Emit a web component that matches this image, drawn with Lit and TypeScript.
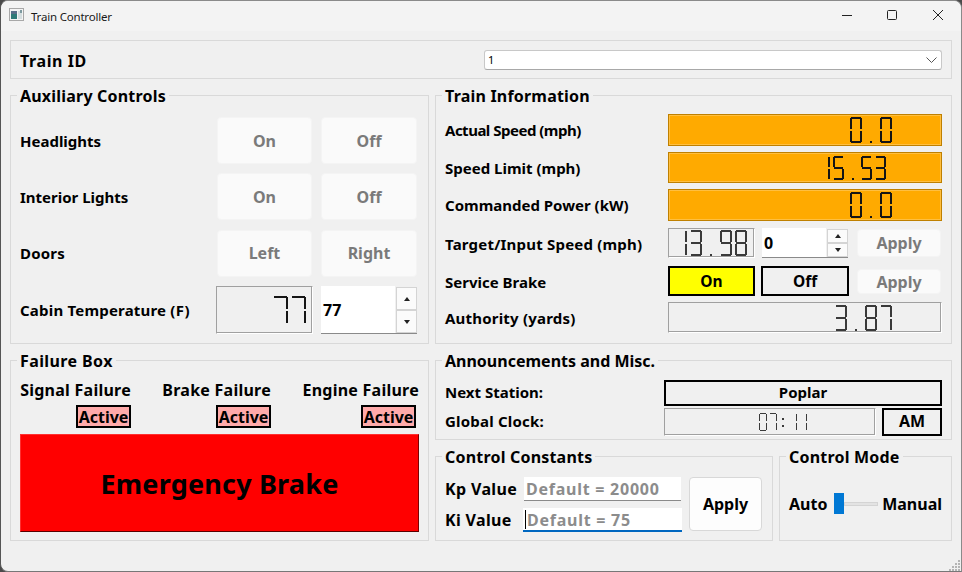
import { LitElement, html, css, svg } from "lit";
import { customElement } from "lit/decorators.js";

const SEG: Record<string, string> = {
  "0": "abcdef", "1": "bc", "2": "abged", "3": "abgcd", "4": "fgbc",
  "5": "afgcd", "6": "afgedc", "7": "abc", "8": "abcdefg", "9": "abcdfg",
};

function segRect(s: string, w: number, h: number, t: number, g: number) {
  const mid = Math.round((h - t) / 2);
  const half = Math.round(h / 2);
  switch (s) {
    case "a": return [g, 0, w - 2 * g, t];
    case "g": return [g, mid, w - 2 * g, t];
    case "d": return [g, h - t, w - 2 * g, t];
    case "f": return [0, g, t, half - g - 1];
    case "b": return [w - t, g, t, half - g - 1];
    case "e": return [0, half + 1, t, h - half - g - 1];
    default: return [w - t, half + 1, t, h - half - g - 1];
  }
}

type Lcd = { w: number; h: number; p: number; t: number; pad: number; cls?: string };

function lcd(value: string, o: Lcd) {
  const cells = [...value].map((c) => {
    if (c === "." || c === ":") {
      const d = Math.max(o.t, 2);
      const x = Math.round((o.p - 3 - d) / 2);
      return html`<span class="cell" style="width:${o.p}px;height:${o.h}px">
        ${c === "."
          ? html`<i class="seg" style="left:${x}px;top:${o.h - d}px;width:${d}px;height:${d}px"></i>`
          : html`<i class="seg" style="left:${x}px;top:${Math.round(o.h * 0.3)}px;width:${d}px;height:${d}px"></i>
                 <i class="seg" style="left:${x}px;top:${Math.round(o.h * 0.65)}px;width:${d}px;height:${d}px"></i>`}
      </span>`;
    }
    return html`<span class="cell" style="width:${o.p}px;height:${o.h}px">
      ${[...SEG[c]].map((s) => {
        const [x, y, w, h] = segRect(s, o.w, o.h, o.t, 1);
        return html`<i class="seg" style="left:${x}px;top:${y}px;width:${w}px;height:${h}px"></i>`;
      })}
    </span>`;
  });
  return html`<div class="lcd ${o.cls ?? ""}" style="padding-right:${o.pad - (o.p - o.w)}px">
    <span class="tl" style="padding-right:${o.pad}px">${value}</span>${cells}
  </div>`;
}

const grip = [
  [10, 0], [10, 3], [7, 3], [10, 6], [7, 6], [4, 6], [10, 9], [7, 9], [4, 9], [1, 9],
];

@customElement("app-root")
export class AppRoot extends LitElement {
  static styles = css`
    :host {
      display: block;
      width: 962px;
      height: 572px;
      background: #4a4a4a;
      overflow: hidden;
      font-family: "Noto Sans", sans-serif;
      font-size: 15px;
      font-weight: 700;
      color: #000;
    }
    .win {
      position: relative;
      box-sizing: border-box;
      width: 962px;
      height: 572px;
      background: #f0f0f0;
      border: 1px solid #8a8a8a;
      border-left-color: #555;
      border-bottom-color: #777;
      border-radius: 8px 8px 0 8px;
      overflow: hidden;
    }
    .title {
      box-sizing: border-box;
      height: 30px;
      background: #f3f3f3;
      display: flex;
      align-items: center;
      padding-left: 8px;
      font-size: 11.5px;
      font-weight: 400;
      letter-spacing: -0.2px;
      color: #1a1a1a;
    }
    .title .ic { margin-top: -2px; }
    .title .name { margin-left: 7px; }
    .title .ctl { margin-left: auto; display: flex; }
    .title .ctl svg { display: block; width: 46px; height: 30px; }
    .main {
      display: grid;
      grid-template-columns: 419px 517px;
      grid-template-rows: 39px 249px 181px;
      column-gap: 6px;
      row-gap: 16px;
      padding: 9px 0 0 9px;
    }
    .g {
      box-sizing: border-box;
      border: 1px solid #d9d9d9;
      display: flex;
      flex-direction: column;
      min-width: 0;
    }
    .lg {
      align-self: flex-start;
      margin: -10px 0 0 6px;
      padding: 0 3px;
      height: 20px;
      line-height: 20px;
      background: #f0f0f0;
      white-space: nowrap;
      font-size: 16px;
      letter-spacing: 0.2px;
    }
    .lg.in { margin-left: -3px; }
    .lg.wide { letter-spacing: 0.4px; }
    .lg.tight { letter-spacing: 0; }
    .trainid {
      grid-column: 1 / 3;
      flex-direction: row;
      align-items: center;
      padding: 0 9px;
      font-size: 16px;
      letter-spacing: 0.6px;
    }
    .trainid .tn { padding-top: 2px; }
    .combo {
      box-sizing: border-box;
      margin-left: auto;
      width: 458px;
      height: 20px;
      background: #fff;
      border: 1px solid #c8c8c8;
      border-bottom-color: #a8a8a8;
      border-radius: 3px;
      display: flex;
      align-items: center;
      justify-content: space-between;
      padding: 0 3px;
      font-size: 11px;
      font-weight: 400;
      letter-spacing: 0;
    }
    .combo svg { display: block; margin-right: 1px; }
    .aux {
      display: grid;
      grid-template-columns: 188px 95px 96px;
      grid-template-rows: 47px 47px 47px 48px;
      column-gap: 9px;
      row-gap: 9.4px;
      padding: 11px 0 0 9px;
      align-items: center;
    }
    .btn {
      box-sizing: border-box;
      height: 100%;
      display: flex;
      align-items: center;
      justify-content: center;
      border-radius: 4px;
      background: #fafafa;
      border: 1px solid #f4f4f4;
      color: #7a7a7a;
      font-size: 16px;
    }
    .lb { white-space: nowrap; font-size: 15px; }
    .lb.n { letter-spacing: -0.5px; }
    .lb.p { letter-spacing: 0.2px; }
    .lb.up { padding-bottom: 3px; }
    .lcd {
      position: relative;
      box-sizing: border-box;
      height: 100%;
      display: flex;
      align-items: center;
      justify-content: flex-end;
      background: #f0f0f0;
      border: 1px solid;
      border-color: #a0a0a0 #fff #fff #a0a0a0;
      box-shadow: inset -1px -1px 0 #a0a0a0;
    }
    .lcd.or {
      background: #ffaa00;
      border-color: #bf8000;
      box-shadow: inset -1px -1px 0 #ffbf40, inset 1px 1px 0 #ffbf40;
    }
    .lcd.tmp { margin: 0 -1px; }
    .cell { position: relative; display: block; flex: none; }
    .seg { position: absolute; background: #3a3a3a; display: block; }
    .lcd.or .seg, .lcd.tmp .seg { background: #151515; }
    .tl {
      position: absolute;
      inset: 0;
      display: flex;
      align-items: center;
      justify-content: flex-end;
      font-size: 12px;
      font-weight: 400;
      color: transparent;
      white-space: nowrap;
    }
    .spin {
      box-sizing: border-box;
      height: 100%;
      background: #fff;
      border-bottom: 1px solid #8a8a8a;
      display: flex;
      align-items: center;
      padding-left: 2px;
      font-size: 16px;
      position: relative;
    }
    .spin .v { flex: 1; }
    .spin .arrows {
      align-self: stretch;
      width: 22px;
      display: flex;
      flex-direction: column;
      background: #f0f0f0;
      padding: 1px 0 0 1px;
      box-sizing: border-box;
    }
    .spin .arrows span {
      flex: 1;
      background: #fbfbfb;
      border: 1px solid #d4d4d4;
      display: flex;
      align-items: center;
      justify-content: center;
    }
    .info {
      display: grid;
      grid-template-columns: 223px 274px;
      grid-template-rows: 38px 37px 39px 38px 36px 31px;
      padding: 8px 0 0 9px;
    }
    .info .lb { display: flex; align-items: center; height: 31px; }
    .h32 { height: 32px; }
    .h31 { height: 31px; }
    .h30 { height: 30px; }
    .fx { display: flex; }
    .fx .lcd { width: 87px; }
    .fx .spin { width: 86px; margin-left: 7px; height: 30px; }
    .apply {
      width: 84px;
      height: 28px;
      margin: 1px 0 0 9px;
    }
    .sb {
      box-sizing: border-box;
      width: 87px;
      height: 30px;
      border: 2px solid #000;
      display: flex;
      align-items: center;
      justify-content: center;
      font-size: 15.5px;
    }
    .sb.on { background: #ffff00; }
    .sb.off { margin-left: 6px; width: 88px; }
    .apply2 { width: 84px; height: 25px; margin: 3px 0 0 8px; }
    .fail { padding: 0 0 0 9px; }
    .fcols {
      display: grid;
      grid-template-columns: 111px 108px 116px;
      column-gap: 32px;
      margin-top: 9px;
      height: 48px;
    }
    .fc { display: flex; flex-direction: column; align-items: flex-end; white-space: nowrap; }
    .fc .n {
      height: 20px;
      line-height: 20px;
      margin-bottom: 5px;
      font-size: 16px;
      letter-spacing: 0.25px;
    }
    .act {
      box-sizing: border-box;
      width: 55px;
      height: 23px;
      border: 2px solid #000;
      background: #ffaaaa;
      display: flex;
      align-items: center;
      justify-content: center;
      font-size: 16px;
    }
    .act.last { margin-right: 3px; }
    .em {
      box-sizing: border-box;
      width: 399px;
      height: 98px;
      margin-top: 6px;
      background: #ff0000;
      border: 1px solid;
      border-color: #ff3030 #7a0000 #5a0000 #ff3030;
      display: flex;
      align-items: center;
      justify-content: center;
      font-size: 27px;
      letter-spacing: 0.2px;
    }
    .ann { padding: 0 9px; }
    .annrow {
      display: grid;
      grid-template-columns: 219px 1fr;
      align-items: center;
    }
    .annrow.a { margin-top: 9px; height: 22px; }
    .annrow.b { margin-top: 6px; height: 23px; }
    .box {
      box-sizing: border-box;
      border: 2px solid #000;
      display: flex;
      align-items: center;
      justify-content: center;
      height: 100%;
      font-size: 15px;
      padding-bottom: 2px;
    }
    .clock { display: flex; height: 100%; }
    .clock .lcd { flex: 1; }
    .clock .box { width: 60px; margin-left: 6px; font-size: 16px; }
    .split {
      display: flex;
      flex-direction: column;
      gap: 16px;
      min-height: 0;
    }
    .split .ann { height: 80px; }
    .bot { display: flex; height: 85px; gap: 6px; }
    .cc { width: 338px; padding-left: 9px; }
    .ccg {
      display: grid;
      grid-template-columns: 79px 157px 81px;
      grid-template-rows: 24px 24px;
      row-gap: 7px;
      margin-top: 10px;
      align-items: center;
    }
    .ccg .lb { font-size: 16px; letter-spacing: 0.35px; }
    .ccg .ab {
      grid-column: 3;
      grid-row: 1 / 3;
      margin-left: 8px;
      width: 73px;
      height: 54px;
      background: #fdfdfd;
      border: 1px solid #d8d8d8;
      color: #000;
      align-self: start;
    }
    .fld {
      box-sizing: border-box;
      height: 24px;
      background: #fff;
      border-bottom: 1px solid #8a8a8a;
      color: #8c8c8c;
      font-size: 16px;
      letter-spacing: 0.75px;
      padding-left: 2px;
      display: flex;
      align-items: center;
      white-space: nowrap;
    }
    .fld.foc {
      margin: 0 -1px;
      padding-top: 1px;
      border-bottom: 2px solid #0067c0;
      position: relative;
    }
    .fld.foc::before {
      content: "";
      width: 1px;
      height: 19px;
      background: #000;
      margin-right: 1px;
    }
    .cm { flex: 1; }
    .cmr {
      display: flex;
      align-items: center;
      padding: 0 9px;
      height: 21px;
      margin-top: 26px;
      font-size: 16px;
    }
    .cmr .au { width: 45px; padding-top: 1px; }
    .cmr .ma { margin-left: auto; padding-top: 1px; }
    .sl { width: 44px; height: 21px; display: flex; align-items: center; }
    .sl .h { width: 10px; height: 21px; background: #0078d4; }
    .sl .tk {
      flex: 1;
      height: 4px;
      box-sizing: border-box;
      background: #e3e3e3;
      border: 1px solid #d4d4d4;
    }
    .grip { position: absolute; right: 0; bottom: 0; display: block; }
  `;

  private arrows() {
    return html`<div class="arrows">
      <span><svg width="6" height="4" viewBox="0 0 6 4"><path d="M3 0 6 4H0z" fill="#222"/></svg></span>
      <span><svg width="6" height="4" viewBox="0 0 6 4"><path d="M0 0h6L3 4z" fill="#222"/></svg></span>
    </div>`;
  }

  render() {
    return html`<div class="win">
      <div class="title">
        <svg class="ic" width="15" height="14" viewBox="0 0 15 14">
          <rect x=".5" y=".5" width="14" height="12" fill="#f4f4f4" stroke="#a8a8a8"/>
          <rect x="2" y="3" width="6" height="8" fill="#2f7a78"/>
          <rect x="2" y="3" width="6" height="3" fill="#5a6f8a"/>
          <rect x="9" y="3" width="4" height="8" fill="#d5dee0"/>
          <rect x="11" y="2" width="2" height="3" fill="#7d9aa0"/>
        </svg>
        <span class="name">Train Controller</span>
        <div class="ctl">
          <svg viewBox="0 0 46 30"><path d="M19 14.5h10" stroke="#222" fill="none"/></svg>
          <svg viewBox="0 0 46 30"><rect x="18.5" y="9.5" width="9" height="9" rx="1" stroke="#222" fill="none"/></svg>
          <svg viewBox="0 0 46 30"><path d="M18 9l10 10M28 9 18 19" stroke="#222" fill="none"/></svg>
        </div>
      </div>
      <div class="main">
        <div class="g trainid">
          <span class="tn">Train ID</span>
          <div class="combo">
            <span>1</span>
            <svg width="11" height="6" viewBox="0 0 11 6"><path d="M.5.5l5 5 5-5" stroke="#555" fill="none"/></svg>
          </div>
        </div>

        <div class="g">
          <div class="lg">Auxiliary Controls</div>
          <div class="aux">
            <div class="lb">Headlights</div><div class="btn">On</div><div class="btn">Off</div>
            <div class="lb">Interior Lights</div><div class="btn">On</div><div class="btn">Off</div>
            <div class="lb p">Doors</div><div class="btn">Left</div><div class="btn">Right</div>
            <div class="lb p">Cabin Temperature (F)</div>
            ${lcd("77", { w: 15, h: 28, p: 18, t: 2, pad: 6, cls: "tmp" })}
            <div class="spin"><span class="v">77</span>${this.arrows()}</div>
          </div>
        </div>

        <div class="g">
          <div class="lg">Train Information</div>
          <div class="info">
            <div class="lb n">Actual Speed (mph)</div>
            <div class="h32">${lcd("0.0", { w: 12, h: 26, p: 15, t: 2, pad: 49, cls: "or" })}</div>
            <div class="lb">Speed Limit (mph)</div>
            <div class="h31">${lcd("15.53", { w: 11, h: 24, p: 14, t: 2, pad: 55, cls: "or" })}</div>
            <div class="lb">Commanded Power (kW)</div>
            <div class="h32">${lcd("0.0", { w: 12, h: 26, p: 15, t: 2, pad: 49, cls: "or" })}</div>
            <div class="lb p">Target/Input Speed (mph)</div>
            <div class="fx h30">
              ${lcd("13.98", { w: 12, h: 26, p: 15, t: 2, pad: 7 })}
              <div class="spin"><span class="v">0</span>${this.arrows()}</div>
              <div class="btn apply">Apply</div>
            </div>
            <div class="lb">Service Brake</div>
            <div class="fx h30">
              <div class="sb on">On</div>
              <div class="sb off">Off</div>
              <div class="btn apply2">Apply</div>
            </div>
            <div class="lb p">Authority (yards)</div>
            <div class="h31">${lcd("3.87", { w: 12, h: 26, p: 15, t: 2, pad: 49 })}</div>
          </div>
        </div>

        <div class="g fail">
          <div class="lg in wide">Failure Box</div>
          <div class="fcols">
            <div class="fc"><span class="n">Signal Failure</span><span class="act">Active</span></div>
            <div class="fc"><span class="n">Brake Failure</span><span class="act">Active</span></div>
            <div class="fc"><span class="n">Engine Failure</span><span class="act last">Active</span></div>
          </div>
          <div class="em">Emergency Brake</div>
        </div>

        <div class="split">
          <div class="g ann">
            <div class="lg in tight">Announcements and Misc.</div>
            <div class="annrow a"><div class="lb up">Next Station:</div><div class="box">Poplar</div></div>
            <div class="annrow b">
              <div class="lb up p">Global Clock:</div>
              <div class="clock">
                ${lcd("07:11", { w: 8, h: 18, p: 10, t: 1, pad: 68 })}
                <div class="box">AM</div>
              </div>
            </div>
          </div>
          <div class="bot">
            <div class="g cc">
              <div class="lg in">Control Constants</div>
              <div class="ccg">
                <div class="lb">Kp Value</div>
                <div class="fld">Default = 20000</div>
                <div class="btn ab">Apply</div>
                <div class="lb">Ki Value</div>
                <div class="fld foc">Default = 75</div>
              </div>
            </div>
            <div class="g cm">
              <div class="lg">Control Mode</div>
              <div class="cmr">
                <span class="au">Auto</span>
                <div class="sl"><div class="h"></div><div class="tk"></div></div>
                <span class="ma">Manual</span>
              </div>
            </div>
          </div>
        </div>
      </div>
      <svg class="grip" width="13" height="11" viewBox="0 0 13 11">
        ${grip.map(([x, y]) => svg`<rect x=${x} y=${y} width="2" height="2" fill="#b4b4b4"/>`)}
      </svg>
    </div>`;
  }
}
